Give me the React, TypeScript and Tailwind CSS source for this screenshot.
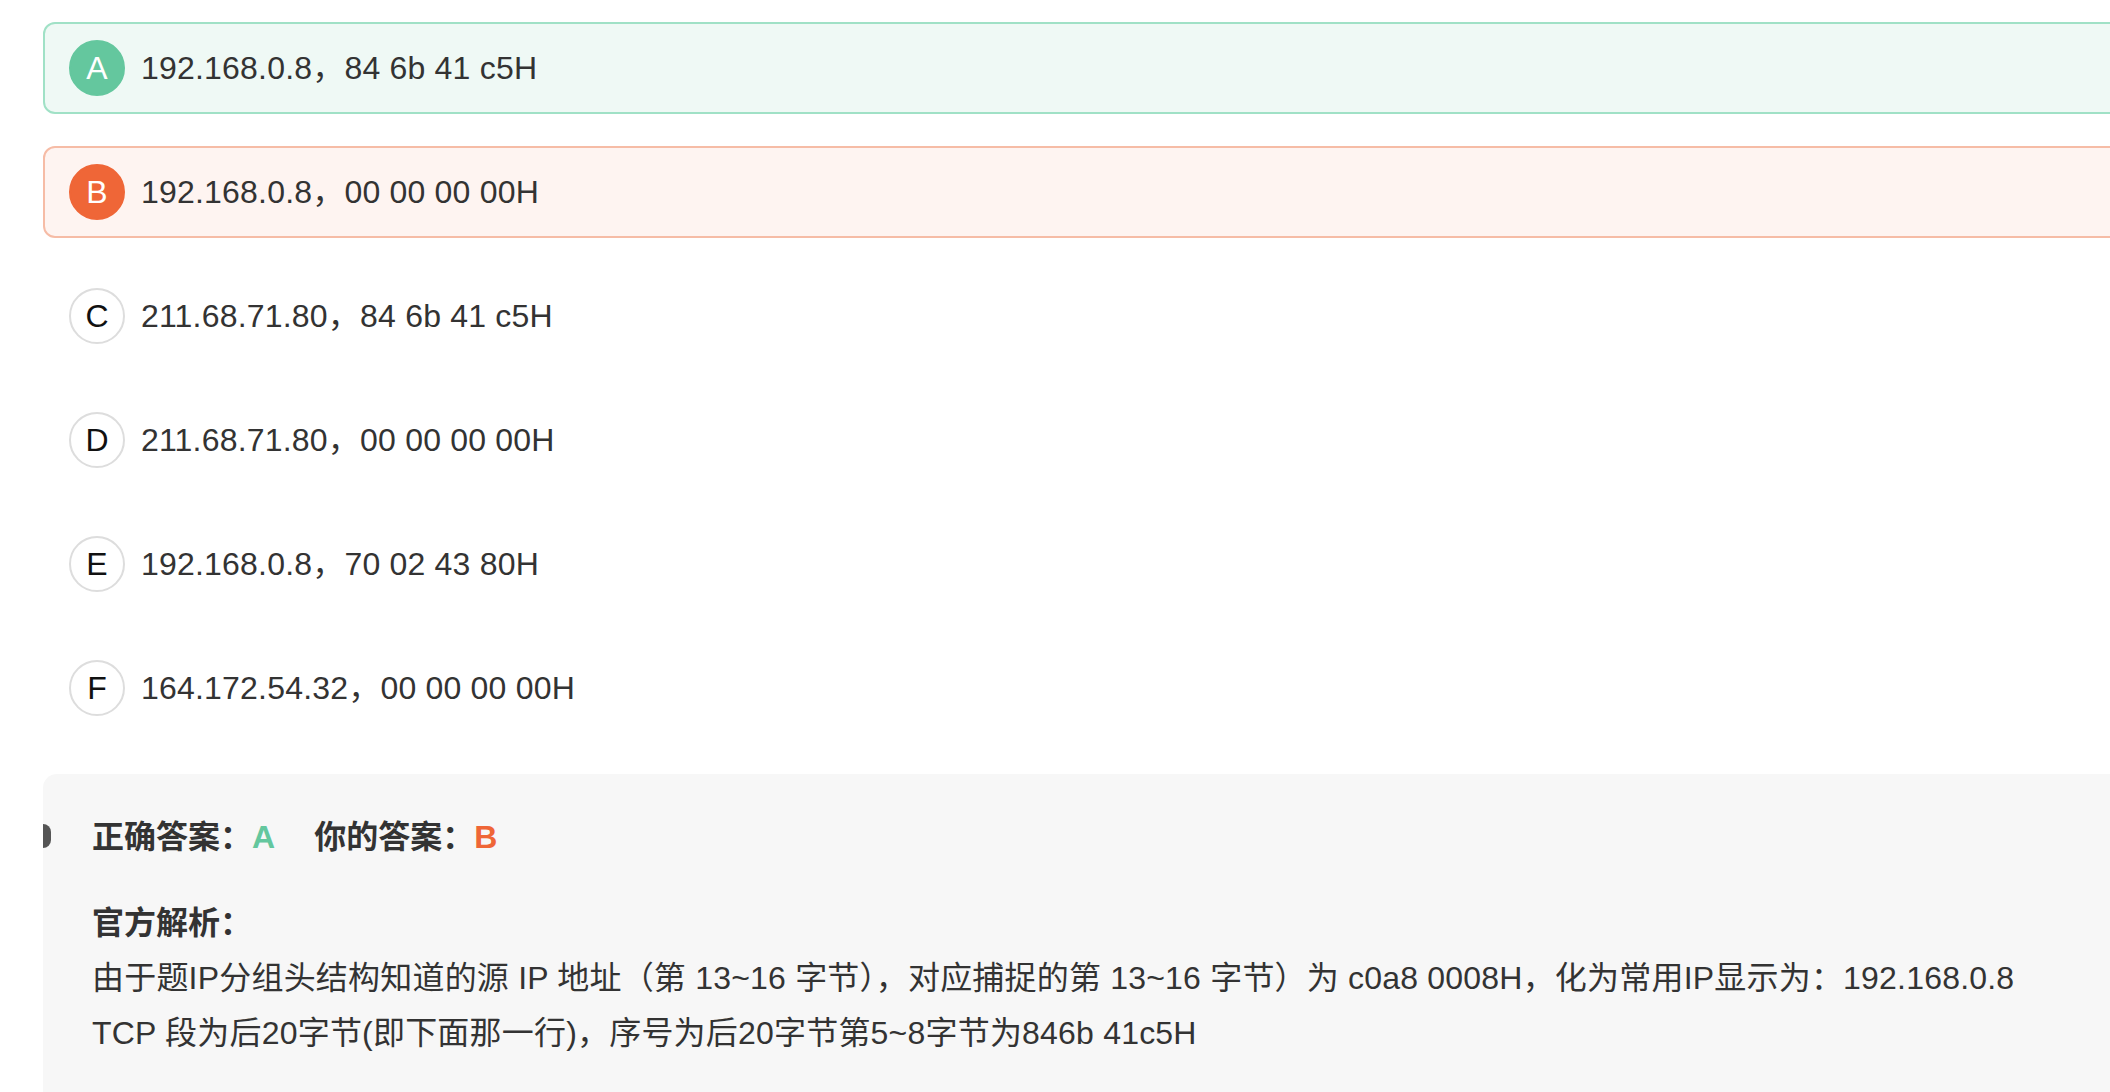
import React from "react";

type Opt = { key: string; text: string; state: "correct" | "wrong" | "none" };

const options: Opt[] = [
  { key: "A", text: "192.168.0.8，84 6b 41 c5H", state: "correct" },
  { key: "B", text: "192.168.0.8，00 00 00 00H", state: "wrong" },
  { key: "C", text: "211.68.71.80，84 6b 41 c5H", state: "none" },
  { key: "D", text: "211.68.71.80，00 00 00 00H", state: "none" },
  { key: "E", text: "192.168.0.8，70 02 43 80H", state: "none" },
  { key: "F", text: "164.172.54.32，00 00 00 00H", state: "none" },
];

function Row({ o }: { o: Opt }) {
  const box =
    o.state === "correct"
      ? "border-[#a0e1c6] bg-[#eff9f5]"
      : o.state === "wrong"
      ? "border-[#f6bca6] bg-[#fef4f1]"
      : "border-transparent bg-transparent";
  const circle =
    o.state === "correct"
      ? "bg-[#64c79e] text-white border-[#64c79e]"
      : o.state === "wrong"
      ? "bg-[#ef6637] text-white border-[#ef6637]"
      : "bg-white text-[#111111] border-[#dddddd]";
  return (
    <div className={`h-[92px] flex items-center pl-[24px] rounded-[12px] border-2 ${box}`}>
      <div
        className={`w-[56px] h-[56px] rounded-full border-2 flex items-center justify-center text-[32px] leading-none shrink-0 ${circle}`}
      >
        {o.key}
      </div>
      <div className="ml-[16px] text-[32px] leading-none text-[#333333] whitespace-nowrap tracking-[0.2px]">
        {o.text}
      </div>
    </div>
  );
}

export default function App() {
  return (
    <div
      className="w-[2110px] h-[1092px] overflow-hidden bg-white"
      style={{ fontFamily: '"Liberation Sans", "Noto Sans CJK SC", sans-serif' }}
    >
      <div className="pl-[43px] pt-[22px] w-[2200px] flex flex-col gap-[32px]">
        {options.map((o) => (
          <Row key={o.key} o={o} />
        ))}
        <div className="relative mt-[8px] rounded-[14px] bg-[#f7f7f7] pt-[36px] pl-[49px] pb-[80px]">
          <div className="absolute left-0 top-[50px] w-[8px] h-[24px] rounded-r-full bg-[#555555]" />
          <div className="flex items-center text-[32px] leading-[54px] font-bold text-[#333333] whitespace-nowrap">
            <span>正确答案：</span>
            <span className="text-[#64c79e]">A</span>
            <span className="ml-[39px]">你的答案：</span>
            <span className="text-[#ef6637]">B</span>
          </div>
          <div className="mt-[32px] text-[32px] leading-[55px] font-bold text-[#333333] whitespace-nowrap">
            官方解析：
          </div>
          <div className="text-[32px] leading-[55px] text-[#333333] whitespace-nowrap tracking-[0.2px]">
            <div>
              由于题IP分组头结构知道的源 IP 地址（第 13~16 字节），对应捕捉的第 13~16 字节）为 c0a8 0008H，化为常用IP显示为：192.168.0.8
            </div>
            <div>TCP 段为后20字节(即下面那一行)，序号为后20字节第5~8字节为846b 41c5H</div>
          </div>
        </div>
      </div>
    </div>
  );
}
